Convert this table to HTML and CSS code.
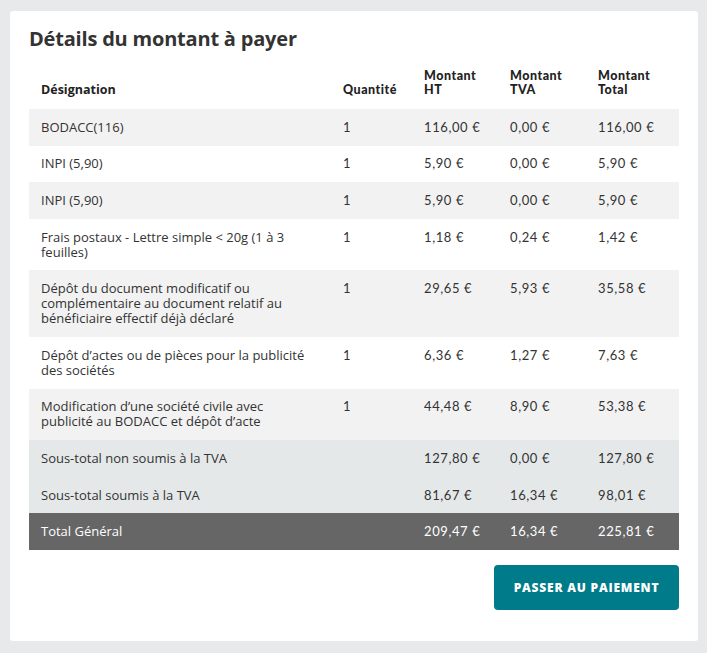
FILE: index.html
```html
<!DOCTYPE html>
<html lang="fr">
<head>
<meta charset="utf-8">
<link rel="stylesheet" href="styles.css">
</head>
<body>
<div class="card">
  <h2 class="title">Détails du montant à payer</h2>
  <table class="tbl">
    <colgroup>
      <col class="c1"><col class="c2"><col class="c3"><col class="c4"><col class="c5">
    </colgroup>
    <thead>
      <tr>
        <th class="th-des">Désignation</th>
        <th>Quantité</th>
        <th>Montant<br>HT</th>
        <th>Montant<br>TVA</th>
        <th>Montant<br>Total</th>
      </tr>
    </thead>
    <tbody>
      <tr class="odd"><td class="des">BODACC(116)</td><td>1</td><td>116,00 €</td><td>0,00 €</td><td>116,00 €</td></tr>
      <tr><td class="des">INPI (5,90)</td><td>1</td><td>5,90 €</td><td>0,00 €</td><td>5,90 €</td></tr>
      <tr class="odd"><td class="des">INPI (5,90)</td><td>1</td><td>5,90 €</td><td>0,00 €</td><td>5,90 €</td></tr>
      <tr><td class="des">Frais postaux - Lettre simple &lt; 20g (1 à 3 feuilles)</td><td>1</td><td>1,18 €</td><td>0,24 €</td><td>1,42 €</td></tr>
      <tr class="odd"><td class="des">Dépôt du document modificatif ou complémentaire au document relatif au bénéficiaire effectif déjà déclaré</td><td>1</td><td>29,65 €</td><td>5,93 €</td><td>35,58 €</td></tr>
      <tr><td class="des">Dépôt d’actes ou de pièces pour la publicité des sociétés</td><td>1</td><td>6,36 €</td><td>1,27 €</td><td>7,63 €</td></tr>
      <tr class="odd"><td class="des">Modification d’une société civile avec publicité au BODACC et dépôt d’acte</td><td>1</td><td>44,48 €</td><td>8,90 €</td><td>53,38 €</td></tr>
      <tr class="sub"><td class="des">Sous-total non soumis à la TVA</td><td></td><td>127,80 €</td><td>0,00 €</td><td>127,80 €</td></tr>
      <tr class="sub"><td class="des">Sous-total soumis à la TVA</td><td></td><td>81,67 €</td><td>16,34 €</td><td>98,01 €</td></tr>
      <tr class="total"><td class="des">Total Général</td><td></td><td>209,47 €</td><td>16,34 €</td><td>225,81 €</td></tr>
    </tbody>
  </table>
  <div class="actions">
    <button class="pay">PASSER AU PAIEMENT</button>
  </div>
</div>
</body>
</html>
```
FILE: styles.css
```css
html, body {
  margin: 0;
  background: #e7e9ea;
}
body {
  padding: 11px 9px 12px 10px;
  font-family: "Open Sans", "Liberation Sans", sans-serif;
  color: #333;
}
.card {
  background: #fff;
  border-radius: 3px;
  padding: 15px 19px 30px 19px;
  height: 585px;
}
.title {
  margin: 0;
  font-size: 20px;
  line-height: 26px;
  font-weight: 700;
  color: #333;
  letter-spacing: -0.2px;
}
.tbl {
  width: 650px;
  border-collapse: collapse;
  table-layout: fixed;
  margin-top: 17px;
}
.c1 { width: 302px; }
.c2 { width: 81px; }
.c3 { width: 86px; }
.c4 { width: 88px; }
.c5 { width: 93px; }
th {
  text-align: left;
  vertical-align: bottom;
  font-family: "Lato", "Open Sans", sans-serif;
  font-weight: 900;
  font-size: 12.5px;
  line-height: 14px;
  color: #222;
  padding: 0 12px 12px 12px;
  letter-spacing: 0.5px;
}
th.th-des {
  font-family: "Open Sans", sans-serif;
  font-weight: 700;
  font-size: 12.5px;
  letter-spacing: 0;
}
td {
  vertical-align: top;
  padding: 10.8px 12px;
  font-size: 13px;
  line-height: 15px;
  color: #333;
  font-family: "Lato", "Open Sans", sans-serif;
  letter-spacing: 0.6px;
}
td.des {
  font-family: "Open Sans", sans-serif;
  font-size: 13px;
  letter-spacing: 0;
  padding-right: 24px;
}
tr.odd td { background: #f2f2f2; }
tr.sub td { background: #e5e8e9; }
tr.total td {
  background: #666666;
  color: #fff;
}
.actions {
  display: flex;
  justify-content: flex-end;
  margin-top: 15px;
}
.pay {
  width: 185px;
  height: 45px;
  border: none;
  border-radius: 4px;
  background: #007b89;
  color: #fff;
  font-family: "Open Sans", sans-serif;
  font-weight: 800;
  font-size: 12px;
  letter-spacing: 0.8px;
  cursor: pointer;
}
```
